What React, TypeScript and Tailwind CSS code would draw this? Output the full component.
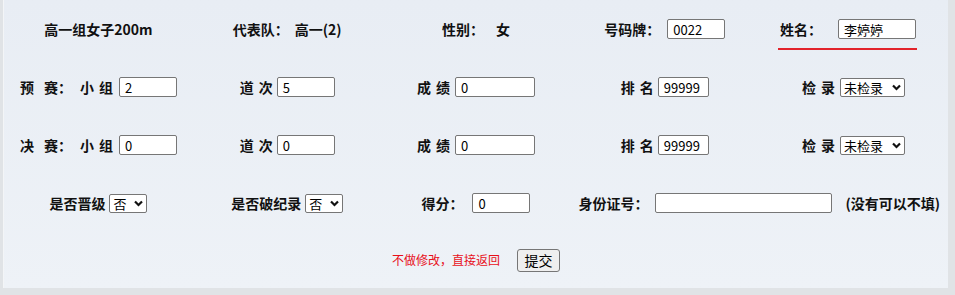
import React from 'react';

const font = { fontFamily: '"Microsoft YaHei", "Noto Sans CJK SC", "Liberation Sans", sans-serif' };

const Input = ({ value, w, ml }: { value: string; w: string; ml?: string }) => (
    <span className={`inline-flex items-center h-[20px] ${w} ${ml ?? ''} bg-white border border-[#767676] rounded-[2px] px-[5px] text-[13px] font-normal text-black leading-none`}>
        {value}
    </span>
);

const Select = ({ value, w, ml }: { value: string; w: string; ml?: string }) => (
    <span className={`inline-flex items-center justify-between h-[19px] ${w} ${ml ?? ''} bg-white border border-[#767676] rounded-[2px] pl-[3px] pr-[3px] text-[13px] font-normal text-black leading-none`}>
        <span>{value}</span>
        <svg width="9" height="7" viewBox="0 0 9 7" className="shrink-0">
            <path d="M1 1.5 L4.5 5 L8 1.5" fill="none" stroke="#111" strokeWidth="2.2" />
        </svg>
    </span>
);

// 两个字中间留空的标签，如 “道 次”
const Spaced = ({ a, b }: { a: string; b: string }) => (
    <>
        <span>{a}</span>
        <span className="ml-[5px]">{b}</span>
    </>
);

const Cell = ({ children, span }: { children: React.ReactNode; span?: string }) => (
    <div className={`flex items-center justify-center ${span ?? ''}`}>{children}</div>
);

const App = () => {
    return (
        <div className="w-[955px] h-[295px] bg-[#e0e3e6] overflow-hidden" style={font}>
            <div className="ml-[3px] w-[945px] h-[288px] border-l border-[#f3f5f7] bg-gradient-to-b from-[#e8edf4] to-[#eef2f7] text-[14px] font-bold text-[#111]">
                <div className="grid grid-cols-5 grid-rows-[58px_58px_58px_58px_56px]">
                    {/* 第一行 */}
                    <Cell>高一组女子200m</Cell>
                    <Cell>
                        <span>代表队：</span>
                        <span className="ml-[6px]">高一(2)</span>
                    </Cell>
                    <Cell>
                        <span>性别：</span>
                        <span className="ml-[12px]">女</span>
                    </Cell>
                    <Cell>
                        <span className="mr-[7px]">号码牌：</span>
                        <Input value="0022" w="w-[58px]" />
                    </Cell>
                    <Cell>
                        <div className="flex flex-col w-[139px] pt-[10px] ml-[-12px]">
                            <div className="flex items-center justify-between pl-[2px] pr-[1px]">
                                <span>姓名：</span>
                                <Input value="李婷婷" w="w-[78px]" />
                            </div>
                            <div className="mt-[8px] h-[2px] bg-[#e2232b]" />
                        </div>
                    </Cell>

                    {/* 预赛 */}
                    <Cell>
                        <span>预</span>
                        <span className="ml-[10px]">赛：</span>
                        <span className="ml-[8px]">小</span>
                        <span className="ml-[5px]">组</span>
                        <Input value="2" w="w-[58px]" ml="ml-[6px]" />
                    </Cell>
                    <Cell>
                        <Spaced a="道" b="次" />
                        <Input value="5" w="w-[58px]" ml="ml-[4px]" />
                    </Cell>
                    <Cell>
                        <Spaced a="成" b="绩" />
                        <Input value="0" w="w-[80px]" ml="ml-[5px]" />
                    </Cell>
                    <Cell>
                        <Spaced a="排" b="名" />
                        <Input value="99999" w="w-[51px]" ml="ml-[4px]" />
                    </Cell>
                    <Cell>
                        <Spaced a="检" b="录" />
                        <Select value="未检录" w="w-[65px]" ml="ml-[5px]" />
                    </Cell>

                    {/* 决赛 */}
                    <Cell>
                        <span>决</span>
                        <span className="ml-[10px]">赛：</span>
                        <span className="ml-[8px]">小</span>
                        <span className="ml-[5px]">组</span>
                        <Input value="0" w="w-[58px]" ml="ml-[6px]" />
                    </Cell>
                    <Cell>
                        <Spaced a="道" b="次" />
                        <Input value="0" w="w-[58px]" ml="ml-[4px]" />
                    </Cell>
                    <Cell>
                        <Spaced a="成" b="绩" />
                        <Input value="0" w="w-[80px]" ml="ml-[5px]" />
                    </Cell>
                    <Cell>
                        <Spaced a="排" b="名" />
                        <Input value="99999" w="w-[51px]" ml="ml-[4px]" />
                    </Cell>
                    <Cell>
                        <Spaced a="检" b="录" />
                        <Select value="未检录" w="w-[65px]" ml="ml-[5px]" />
                    </Cell>

                    {/* 其他 */}
                    <Cell>
                        <span className="mr-[4px]">是否晋级</span>
                        <Select value="否" w="w-[38px]" />
                    </Cell>
                    <Cell>
                        <span className="mr-[4px]">是否破纪录</span>
                        <Select value="否" w="w-[38px]" />
                    </Cell>
                    <Cell>
                        <span className="mr-[9px]">得分：</span>
                        <Input value="0" w="w-[58px]" />
                    </Cell>
                    <Cell span="col-span-2">
                        <span className="mr-[7px]">身份证号：</span>
                        <Input value="" w="w-[177px]" />
                        <span className="ml-[13px]">(没有可以不填)</span>
                    </Cell>

                    {/* 提交 */}
                    <Cell span="col-span-5">
                        <span className="text-[12px] font-normal text-[#e8101a]">不做修改，直接返回</span>
                        <span className="ml-[17px] inline-flex items-center justify-center w-[43px] h-[23px] bg-[#efefef] border border-[#767676] rounded-[3px] text-[14px] font-normal text-black">
                            提交
                        </span>
                    </Cell>
                </div>
            </div>
        </div>
    );
};

export default App;
